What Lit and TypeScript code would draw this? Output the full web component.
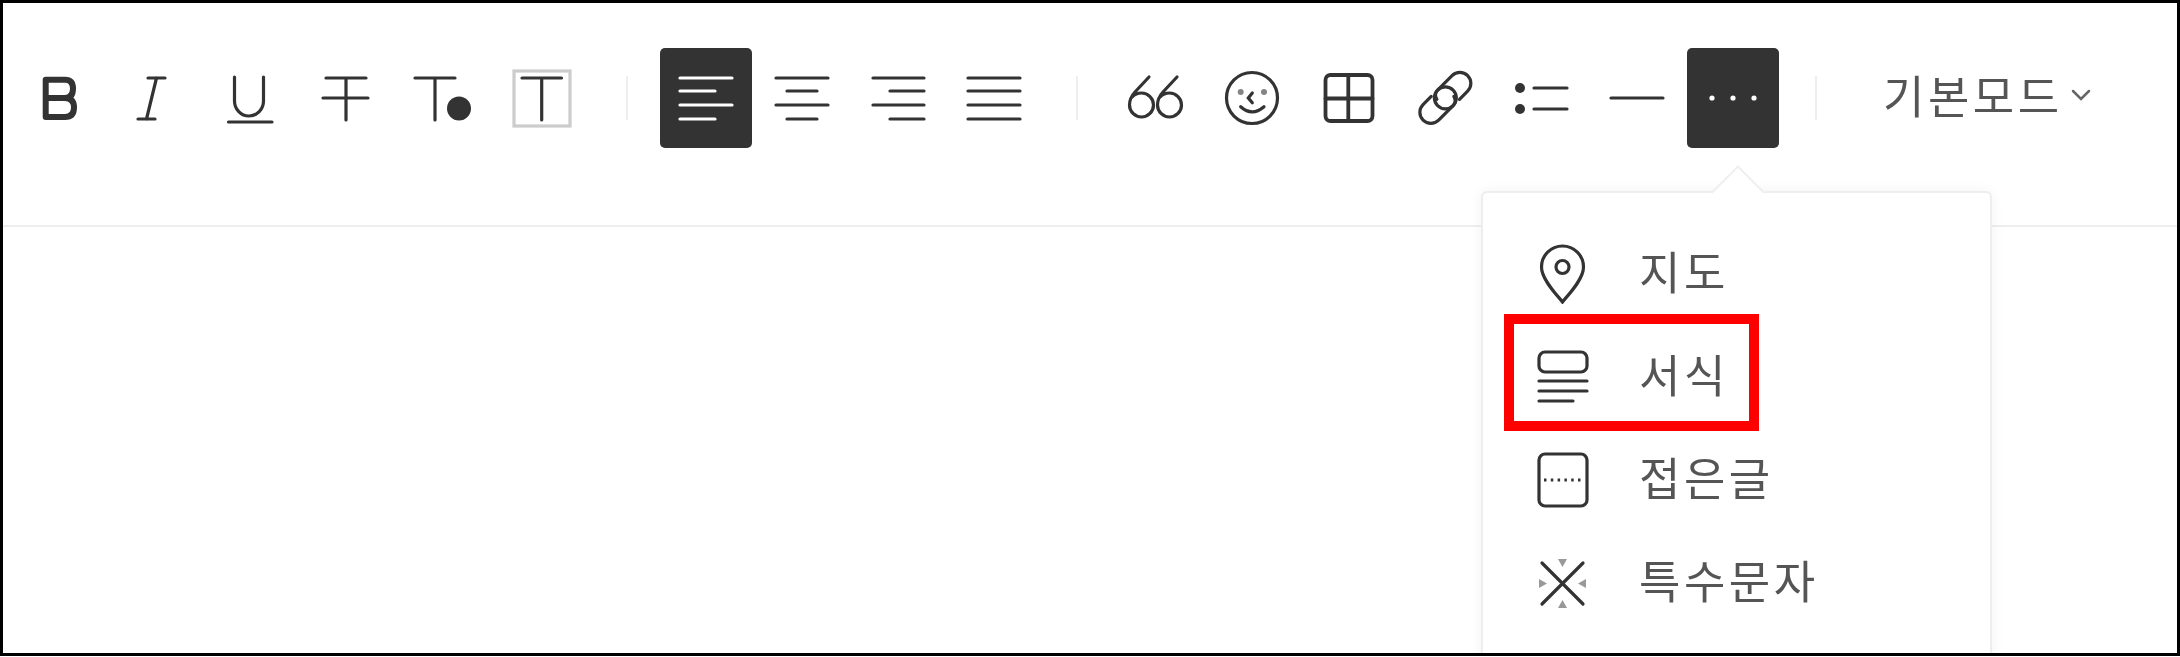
import { LitElement, css, html, svg } from "lit";
import { customElement } from "lit/decorators.js";

// every toolbar icon is drawn on the 92x100 button box
const line = (x1: number, x2: number, y: number) =>
  svg`<path d="M${x1} ${y}H${x2}" />`;

const alignIcon = (rows: [number, number][]) =>
  rows.map(([a, b], i) => line(a, b, [30, 43, 57, 71][i]));

const quoteSix = svg`<path d="M39 29L25 44Q19.500 50 19.500 57a12 12 0 1 0 12-12Q26 45 22 49" />`;
const linkPart = svg`<path d="M38 39H26.500a11 11 0 0 0 0 22H47a11 11 0 0 0 0-22c-3 0-6 2-7 6" />`;

const formatIcons = [
  svg`<path d="M25.500 58C21 52 4.500 36 4.500 23a21 21 0 0 1 42 0C46.500 36 30 52 25.500 58Z" /><circle cx="25.500" cy="23" r="6.500" />`,
  svg`<rect x="2" y="5" width="48" height="20" rx="6" /><path d="M2 34H50M2 44H50M2 54H36" />`,
  svg`<rect x="2" y="4" width="48" height="52" rx="6" /><path d="M7 30H45" stroke-dasharray="2.500 4.300" stroke-linecap="butt" />`,
  svg`<path d="M5 10L46 51M46 10L5 51" />
    <path class="solid faded" d="M21 6H30L25.500 14ZM21 55H30L25.500 47ZM2 26V35L10 30.500ZM49 26V35L41 30.500Z" />`,
];

const menuItems = ["지도", "서식", "접은글", "특수문자"];

@customElement("app-root")
export class AppRoot extends LitElement {
  private button(content: unknown, cls = "") {
    return html`<button class="tool ${cls}">
      <svg viewBox="0 0 92 100" width="92" height="100">${content}</svg>
    </button>`;
  }

  render() {
    return html`
      <div class="frame">
        <div class="toolbar">
          ${this.button(svg`<path class="bold" d="M32.700 31.700H52Q60 31.700 60 40.500Q60 50 52 50H32.700M52 50Q61 50 61 59.500Q61 69 52 69H32.700V31.700" />`)}
          ${this.button(svg`<path d="M39 30H56M29 71H46M47.500 30L37.500 71" />`)}
          ${this.button(svg`<path d="M29.500 29V53a14.500 15 0 0 0 29 0V29M23.500 74H67" />`)}
          ${this.button(svg`<path d="M25 30H65M45 30V72M22 50H67" />`)}
          ${this.button(svg`<path d="M18 30H58M38 30V72" /><circle class="solid" cx="62" cy="60.500" r="12" />`)}
          ${this.button(svg`<rect class="pale" x="21" y="23" width="56" height="55" /><path d="M29 30H68.500M48.700 30V72" />`)}
          <span class="sep first"></span>
          ${this.button(alignIcon([[20, 72], [20, 55], [20, 72], [20, 55]]), "active")}
          ${this.button(alignIcon([[20, 72], [31, 61], [20, 72], [31, 61]]))}
          ${this.button(alignIcon([[21, 72], [38, 72], [21, 72], [38, 72]]))}
          ${this.button(alignIcon([[20, 72], [20, 72], [20, 72], [20, 72]]))}
          <span class="sep"></span>
          ${this.button(svg`${quoteSix}<g transform="translate(28 0)">${quoteSix}</g>`)}
          ${this.button(svg`<circle cx="46" cy="50" r="25.500" />
            <circle class="solid faded" cx="34.700" cy="44" r="3" /><circle class="solid faded" cx="58" cy="44" r="3" />
            <path d="M46.300 45L42.300 50L46.300 54.700M34.700 58.700Q46 69 58 58.700" />`)}
          ${this.button(svg`<rect class="heavy" x="23.500" y="27" width="47" height="46" rx="5" /><path class="heavy" d="M46.300 27V73M23.500 50.500H70.500" />`)}
          ${this.button(svg`<g transform="rotate(-45 47 49.500)">${linkPart}<g transform="rotate(180 47 50)">${linkPart}</g></g>`)}
          ${this.button(svg`<circle class="solid" cx="26" cy="40" r="5" /><circle class="solid" cx="26" cy="61" r="5" /><path d="M40 40H73M40 61H73" />`)}
          ${this.button(svg`<path d="M21 50H73" />`)}
          ${this.button(svg`<circle class="solid" cx="25" cy="50" r="2.600" /><circle class="solid" cx="46" cy="50" r="2.600" /><circle class="solid" cx="67" cy="50" r="2.600" />`, "active more")}
          <span class="sep"></span>
          <div class="mode">
            <span>기본모드</span>
            <svg viewBox="0 0 20 12" width="20" height="12"><path d="M2 2L10 10L18 2" /></svg>
          </div>
        </div>

        <div class="menu">
          <span class="caret"></span>
          ${menuItems.map(
            (label, i) => html`<div class="item">
              <svg viewBox="0 0 52 60" width="52" height="60">${formatIcons[i]}</svg>
              <span>${label}</span>
            </div>`
          )}
        </div>
        <div class="callout"></div>
      </div>
    `;
  }

  static styles = css`
    :host {
      display: block;
      width: 2180px;
      background: #fff;
      font-family: "Noto Sans CJK KR", "Noto Sans", sans-serif;
      color: #555;
    }

    .frame {
      position: relative;
      box-sizing: border-box;
      height: 656px;
      border: 3px solid #000;
      overflow: hidden;
    }

    svg {
      display: block;
      fill: none;
      stroke: #333;
      stroke-width: 3.200;
      stroke-linecap: round;
      filter: blur(0.6px);
    }

    svg .solid {
      fill: currentColor;
      stroke: none;
    }

    svg .faded {
      opacity: 0.6;
    }

    svg .bold {
      stroke-width: 6;
      stroke-linejoin: round;
    }

    svg .heavy {
      stroke-width: 3.800;
    }

    svg .pale {
      stroke: #ccc;
    }

    /* Toolbar */
    .toolbar {
      display: flex;
      align-items: center;
      gap: 4px;
      box-sizing: border-box;
      height: 224px;
      padding: 45px 0 77px 10px;
      border-bottom: 2px solid #eee;
    }

    .tool {
      flex: none;
      width: 92px;
      height: 100px;
      padding: 0;
      border: 0;
      border-radius: 5px;
      background: none;
      color: #333;
    }

    .tool.active {
      background: #333;
      color: #fff;
    }

    .tool.active svg {
      stroke: #fff;
    }

    .tool.more {
      margin-left: 1px;
    }

    .sep {
      flex: none;
      width: 2px;
      height: 44px;
      margin: 0 28px 0 32px;
      background: #eee;
    }

    .sep.first {
      margin-left: 37px;
    }

    .mode {
      display: flex;
      align-items: center;
      gap: 8px;
      margin-left: 34px;
      font-size: 45px;
      letter-spacing: 3.500px;
      line-height: 60px;
      white-space: nowrap;
    }

    .mode span,
    .item span {
      padding-bottom: 6px;
      filter: blur(0.5px);
    }

    .mode svg {
      stroke: #666;
      stroke-width: 2.500;
      margin-top: -6px;
      filter: none;
    }

    /* Dropdown */
    .menu {
      position: absolute;
      top: 188px;
      left: 1478px;
      box-sizing: border-box;
      width: 511px;
      height: 520px;
      padding: 29px 0 0 54px;
      background: #fff;
      border: 2px solid #eee;
      border-radius: 6px;
      box-shadow: 0 0 14px rgba(0, 0, 0, 0.05);
    }

    .caret {
      position: absolute;
      top: -20px;
      left: 236px;
      width: 36px;
      height: 36px;
      background: #fff;
      border-top: 2px solid #eee;
      border-left: 2px solid #eee;
      transform: rotate(45deg);
    }

    .item {
      display: flex;
      align-items: center;
      gap: 50px;
      height: 103px;
      font-size: 45px;
      letter-spacing: 3.500px;
      white-space: nowrap;
    }

    .callout {
      position: absolute;
      top: 311px;
      left: 1501px;
      box-sizing: border-box;
      width: 255px;
      height: 117px;
      border: 10px solid #f00;
    }
  `;
}

declare global {
  interface HTMLElementTagNameMap {
    "app-root": AppRoot;
  }
}
